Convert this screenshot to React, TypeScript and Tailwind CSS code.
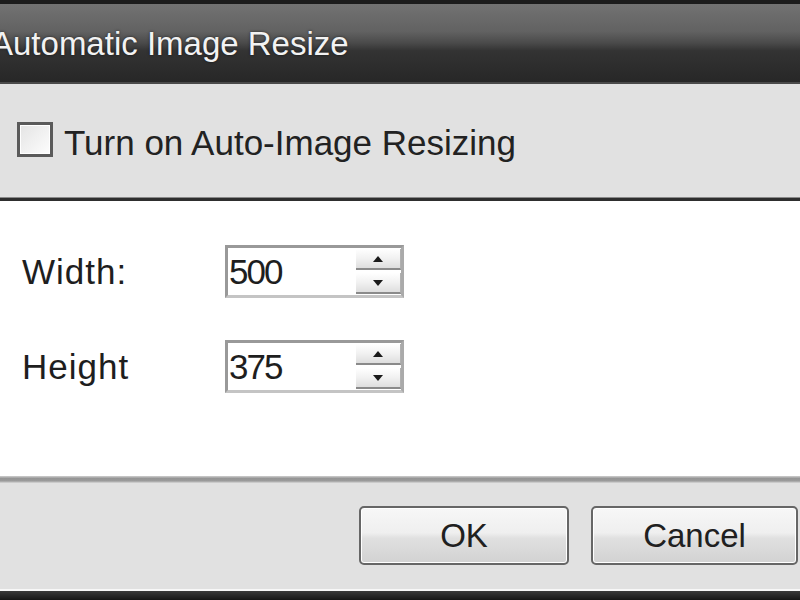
function SpinBox({ value }: { value: string }) {
  return (
    <div className="flex h-[53px] w-[179px] border-[3px] border-t-[#999999] border-l-[#999999] border-r-[#aaaaaa] border-b-[#c4c4c4] bg-white">
      <div className="flex flex-1 items-center pl-[1px] text-[35px] leading-none tracking-[-2px] text-[#1e1e1e]">{value}</div>
      <div className="flex w-[45px] flex-col gap-[3px] py-[1px]">
        <button className="flex flex-1 items-center justify-center border-b-2 border-r border-b-[#8a8a8a] border-r-[#b0b0b0] bg-[linear-gradient(to_bottom,#ffffff,#f1f1f1_50%,#dedede)]">
          <svg width="10" height="6" viewBox="0 0 10 6">
            <path d="M5 0 L10 6 L0 6 Z" fill="#1a1a1a" />
          </svg>
        </button>
        <button className="flex flex-1 items-center justify-center border-b-2 border-r border-b-[#8a8a8a] border-r-[#b0b0b0] bg-[linear-gradient(to_bottom,#ffffff,#f1f1f1_50%,#dedede)]">
          <svg width="10" height="6" viewBox="0 0 10 6">
            <path d="M0 0 L10 0 L5 6 Z" fill="#1a1a1a" />
          </svg>
        </button>
      </div>
    </div>
  );
}

function DialogButton({ label, width }: { label: string; width: string }) {
  return (
    <button
      className={`${width} flex h-[59px] items-center justify-center rounded-[5px] border-2 border-[#666666] bg-[linear-gradient(to_bottom,#f7f7f7,#efefef_45%,#e0e0e0_55%,#d2d2d2)] text-[33px] leading-none text-[#202020] shadow-[inset_0_0_0_1px_#ffffff]`}
    >
      {label}
    </button>
  );
}

export default function App() {
  return (
    <div className="flex h-[600px] w-[800px] flex-col overflow-hidden bg-white font-['Liberation_Sans',Arial,sans-serif]">
      {/* title bar */}
      <div className="h-[84px] shrink-0 border-t-4 border-b-2 border-t-[#1c1c1c] border-b-[#4a4a4a] bg-[linear-gradient(to_bottom,#727272,#626262_35%,#4a4a4a_50%,#333333_60%,#272727)] pt-[23px]">
        <div className="-ml-[9px] text-[33px] leading-none text-[#f2f2f2] [text-shadow:0_0_3px_rgba(0,0,0,0.6)]">
          Automatic Image Resize
        </div>
      </div>

      {/* checkbox strip */}
      <div className="h-[113px] shrink-0 bg-[#e1e1e1] pl-[17px] pt-[38px]">
        <label className="flex items-start">
          <span className="h-[35px] w-[36px] shrink-0 border-[3px] border-[#5a5a5a] bg-[linear-gradient(135deg,#e4e4e4,#fdfdfd)] shadow-[inset_0_0_0_1px_#ffffff]" />
          <span className="ml-[11px] mt-[3px] text-[35px] leading-none text-[#222222]">Turn on Auto-Image Resizing</span>
        </label>
      </div>
      <div className="h-[4px] shrink-0 border-t border-[#8a8a8a] bg-[#2e2e2e]" />

      {/* size fields */}
      <div className="flex h-[275px] shrink-0 flex-col gap-[42px] bg-white pl-[22px] pt-[44px]">
        <div className="flex items-center">
          <span className="w-[203px] text-[35px] leading-none tracking-[1px] text-[#1e1e1e]">Width:</span>
          <SpinBox value="500" />
        </div>
        <div className="flex items-center">
          <span className="w-[203px] text-[35px] leading-none tracking-[1px] text-[#1e1e1e]">Height</span>
          <SpinBox value="375" />
        </div>
      </div>
      <div className="h-[7px] shrink-0 bg-[linear-gradient(to_bottom,#cfcfcf,#959595_35%,#9a9a9a_70%,#d9d9d9)]" />

      {/* buttons */}
      <div className="flex h-[106px] shrink-0 justify-end gap-[22px] bg-[#e1e1e1] pr-[2px] pt-[23px]">
        <DialogButton label="OK" width="w-[210px]" />
        <DialogButton label="Cancel" width="w-[207px]" />
      </div>
      <div className="h-[2px] shrink-0 bg-[#f7f7f7]" />
      <div className="flex-1 bg-[linear-gradient(to_bottom,#3a3a3a,#161616)]" />
    </div>
  );
}
